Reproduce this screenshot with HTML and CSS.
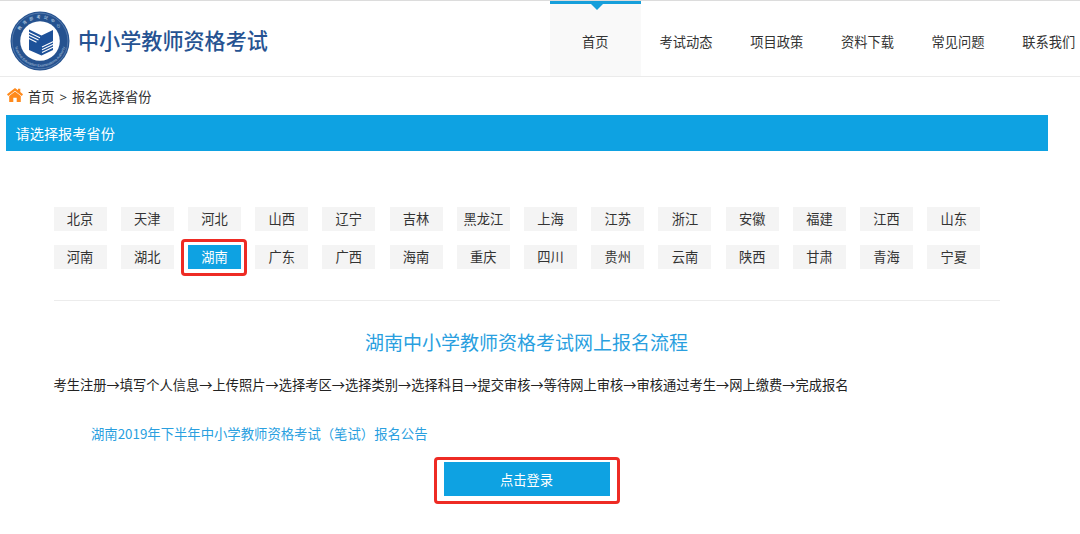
FILE: index.html
```
<!DOCTYPE html>
<html lang="zh-CN">
<head>
    <meta charset="UTF-8">
    <title>中小学教师资格考试</title>
    <link rel="stylesheet" href="styles.css">
</head>
<body>

    <div class="header">
        <a class="logo" href="#">
            <svg class="logoIcon" width="60" height="60" viewBox="0 0 60 60">
                <defs>
                    <path id="arcTop" d="M7.5 30a22.5 22.5 0 0 1 45 0"/>
                    <path id="arcBottom" d="M4.300 30a25.700 25.700 0 0 0 51.400 0"/>
                </defs>
                <circle cx="30" cy="30" r="29.5" fill="#25528f"/>
                <circle cx="30" cy="30" r="27.9" fill="none" stroke="#6f90bd" stroke-width=".6"/>
                <circle cx="30" cy="30" r="19.8" fill="#fff"/>
                <text class="sealCn"><textPath href="#arcTop" startOffset="50%" text-anchor="middle">教育部考试中心</textPath></text>
                <text class="sealEn"><textPath href="#arcBottom" startOffset="50%" text-anchor="middle">National Education Examinations Authority</textPath></text>
                <!-- book -->
                <path fill="#1d5199" d="M19 18.500l12.500 6 11.500-5.500v12l-11.500 5.500L19 30.500z"/>
                <path fill="#1d5199" d="M19 28.500l12.500 6L43 30v9l-11.500 5.500L19 39z"/>
                <path fill="none" stroke="#fff" stroke-width="1.100" d="M18.500 21.200l11.500 5.600M18.500 24.200l10 4.900M18.500 27.200l8 4M32 36l11.500-5.500M32 38.700l11.500-5.500M32 41.400l11.500-5.500"/>
            </svg>
            <span class="logoText">中小学教师资格考试</span>
        </a>
        <div class="nav">
            <a class="navItem active" href="#">首页</a>
            <a class="navItem" href="#">考试动态</a>
            <a class="navItem" href="#">项目政策</a>
            <a class="navItem" href="#">资料下载</a>
            <a class="navItem" href="#">常见问题</a>
            <a class="navItem" href="#">联系我们</a>
        </div>
    </div>

    <div class="crumb">
        <svg class="homeIcon" width="16" height="14" viewBox="0 0 16 14">
            <path fill="#ff8a1c" d="M8 0l3 2.300V.8h2.300v3.300L16 6.300l-1.200 1.600L8 2.700 1.200 7.900 0 6.300z"/>
            <path fill="#ff8a1c" d="M8 3.500l5.800 4.500v6H9.700v-4.200H6.300V14H2.200V8z"/>
        </svg>
        <span>首页</span><span class="arrow">&gt;</span><span>报名选择省份</span>
    </div>

    <div class="titleBar">请选择报考省份</div>

    <div class="content">
        <div class="provinces">
            <a class="province">北京</a>
            <a class="province">天津</a>
            <a class="province">河北</a>
            <a class="province">山西</a>
            <a class="province">辽宁</a>
            <a class="province">吉林</a>
            <a class="province">黑龙江</a>
            <a class="province">上海</a>
            <a class="province">江苏</a>
            <a class="province">浙江</a>
            <a class="province">安徽</a>
            <a class="province">福建</a>
            <a class="province">江西</a>
            <a class="province">山东</a>
            <a class="province">河南</a>
            <a class="province">湖北</a>
            <a class="province selected">湖南</a>
            <a class="province">广东</a>
            <a class="province">广西</a>
            <a class="province">海南</a>
            <a class="province">重庆</a>
            <a class="province">四川</a>
            <a class="province">贵州</a>
            <a class="province">云南</a>
            <a class="province">陕西</a>
            <a class="province">甘肃</a>
            <a class="province">青海</a>
            <a class="province">宁夏</a>
        </div>

        <h2 class="flowTitle">湖南中小学教师资格考试网上报名流程</h2>
        <p class="flow">考生注册→填写个人信息→上传照片→选择考区→选择类别→选择科目→提交审核→等待网上审核→审核通过考生→网上缴费→完成报名</p>
        <a class="notice" href="#">湖南2019年下半年中小学教师资格考试（笔试）报名公告</a>
        <div class="loginBox">
            <button class="loginButton" type="button">点击登录</button>
        </div>
    </div>

</body>
</html>
```

FILE: styles.css
```
* {
    box-sizing: border-box;
}

body {
    margin: 0;
    height: 534px;
    overflow: hidden;
    background: #fff;
    color: #333;
    font-family: "Noto Sans CJK SC", sans-serif;
    font-size: 13.25px;
}

a {
    color: inherit;
    text-decoration: none;
}

.header {
    display: flex;
    justify-content: space-between;
    height: 77px;
    border-top: 1px solid #dcdcdc;
    border-bottom: 1px solid #ebebeb;
}

.logo {
    display: flex;
    align-items: flex-start;
    padding: 10px 0 0 10px;
}

.logoText {
    margin-left: 8px;
    line-height: 58px;
    font-size: 21.1px;
    font-weight: 500;
    color: #265392;
}

.sealCn {
    font-size: 4px;
    letter-spacing: 3px;
    fill: #d5e0ef;
}

.sealEn {
    font-family: "Liberation Sans", sans-serif;
    font-size: 3.6px;
    fill: #b4c6df;
}

.nav {
    display: flex;
    flex: none;
    width: 530px;
}

.navItem {
    flex: none;
    width: 90.7px;
    line-height: 82px;
    height: 75px;
    text-align: center;
}

.navItem.active {
    position: relative;
    line-height: 76px;
    border-top: 3px solid #169fdb;
    background: #f9f9f9;
}

.navItem.active::before {
    content: "";
    position: absolute;
    top: 0;
    left: 41px;
    border: 6px solid transparent;
    border-top-color: #169fdb;
    border-bottom: 0;
}

.crumb {
    display: flex;
    height: 38px;
    padding-left: 7px;
    line-height: 40px;
}

.homeIcon {
    margin: 11px 5px 0 0;
}

.arrow {
    margin: 0 5px;
    font-family: "Noto Sans", sans-serif;
}

.titleBar {
    width: 1042px;
    height: 36px;
    margin-left: 6px;
    padding-left: 9.5px;
    line-height: 36px;
    font-size: 14.2px;
    color: #fff;
    background: #0ea2e2;
}

.content {
    width: 946px;
    margin-left: 53.5px;
    padding-top: 56px;
}

.provinces {
    display: grid;
    grid-template-columns: repeat(14, 53px);
    grid-auto-rows: 24px;
    gap: 14px 14.23px;
    height: 94px;
    border-bottom: 1px solid #ececec;
}

.province {
    line-height: 24px;
    text-align: center;
    background: #f4f4f4;
}

/* red frame round the current province */
.province.selected {
    position: relative;
    color: #fff;
    background: #0ea2e2;
}

.province.selected::after {
    content: "";
    position: absolute;
    top: -6px;
    left: -7px;
    right: -6px;
    bottom: -7px;
    border: 3px solid #ee2b24;
    border-radius: 4px;
}

.flowTitle {
    margin: 26px 0 0;
    line-height: 30px;
    font-size: 19px;
    font-weight: 400;
    text-align: center;
    color: #2a9fdf;
}

.flow {
    margin: 18px 0 0;
    line-height: 20px;
    white-space: nowrap;
    color: #222;
}

.notice {
    display: block;
    margin: 29px 0 0 37.5px;
    line-height: 20px;
    font-size: 13.35px;
    color: #2a9fdf;
}

.loginBox {
    width: 186px;
    height: 47px;
    margin: 13px auto 0;
    padding: 2px 7px;
    border: 3px solid #ee2b24;
    border-radius: 4px;
}

.loginButton {
    display: block;
    width: 166px;
    height: 34px;
    padding: 0;
    border: 0;
    font: inherit;
    color: #fff;
    background: #0ea2e2;
}
```
